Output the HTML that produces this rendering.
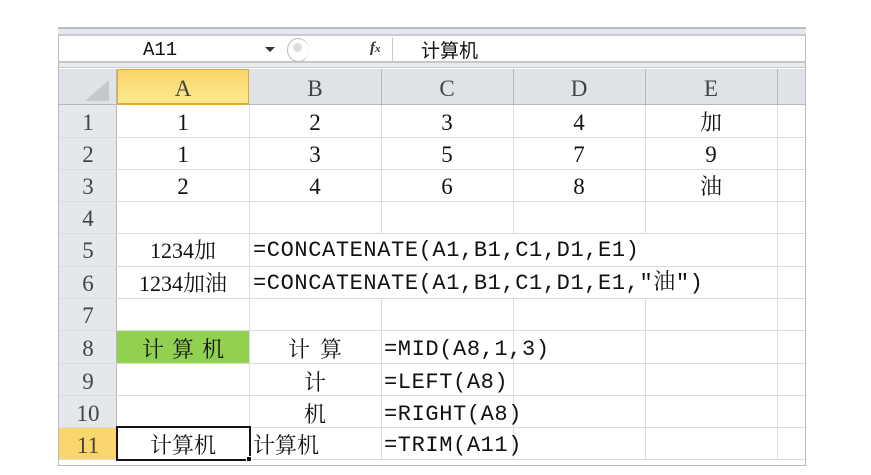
<!DOCTYPE html>
<html><head><meta charset="utf-8"><style>
body{margin:0;width:871px;height:475px;background:#fff;position:relative;overflow:hidden;font-family:"Liberation Serif","Noto Serif CJK SC",serif;}
div{position:absolute;box-sizing:border-box;}
.t{font-size:22px;line-height:32px;color:#111;white-space:nowrap;}
.c{text-align:center;}
.h{color:#444;}
.vl{width:1px;background:#dadcdd;}
.hl{height:1px;background:#dadcdd;}
.f{font-family:'Liberation Mono','Noto Serif CJK SC',monospace;letter-spacing:0.6px;}
</style></head><body>
<div style="left:58px;top:28px;width:748px;height:438px;border:1px solid #b8bcc2;border-top:none;"></div>
<div style="left:58px;top:27px;width:748px;height:9px;background:#e4e7eb;border-top:2px solid #b9bdc3;border-bottom:2px solid #c8ccd1;"></div>
<div style="left:59px;top:36px;width:746px;height:27px;background:#fff;border-bottom:2px solid #c3c7cc;"></div>
<div style="left:59px;top:63px;width:746px;height:5px;background:#e9ecef;border-bottom:1px solid #c8ccd1;"></div>
<div class="t" style="left:143px;top:34px;font-size:19px;font-family:'Liberation Mono',monospace;">A11</div>
<div style="left:265px;top:47px;width:0;height:0;border-left:5px solid transparent;border-right:5px solid transparent;border-top:5px solid #333;"></div>
<div style="left:287px;top:38px;width:22px;height:24px;border:1px solid #bbb;border-radius:50%;border-right:none;"></div>
<div style="left:293px;top:43px;width:9px;height:9px;border-radius:50%;background:#ddd;"></div>
<div style="left:370px;top:40px;font-family:'Liberation Serif';font-style:italic;font-weight:bold;font-size:15px;color:#333;">f<span style="font-size:11px">x</span></div>
<div style="left:392px;top:37px;width:1px;height:26px;background:#c8ccd1;"></div>
<div class="t" style="left:421px;top:34px;font-size:19px;font-family:'Noto Sans CJK SC',sans-serif;">计算机</div>
<div style="left:59px;top:69px;width:746px;height:36px;background:#dfe3e8;border-bottom:1px solid #b3b8be;"></div>
<div style="left:117px;top:69px;width:132px;height:36px;background:linear-gradient(#f8d56a,#fde98e);border:1px solid #e2a838;border-bottom:2px solid #e2a838;"></div>
<div style="left:85px;top:80px;width:0;height:0;border-left:24px solid transparent;border-bottom:21px solid #c5c9ce;"></div>
<div style="left:116px;top:69px;width:1px;height:36px;background:#b3b8be;"></div>
<div style="left:381px;top:69px;width:1px;height:36px;background:#b3b8be;"></div>
<div style="left:513px;top:69px;width:1px;height:36px;background:#b3b8be;"></div>
<div style="left:645px;top:69px;width:1px;height:36px;background:#b3b8be;"></div>
<div style="left:777px;top:69px;width:1px;height:36px;background:#b3b8be;"></div>
<div class="t c h" style="left:117px;top:73px;width:132px;font-size:23px;">A</div>
<div class="t c h" style="left:249px;top:73px;width:132px;font-size:23px;">B</div>
<div class="t c h" style="left:381px;top:73px;width:132px;font-size:23px;">C</div>
<div class="t c h" style="left:513px;top:73px;width:132px;font-size:23px;">D</div>
<div class="t c h" style="left:645px;top:73px;width:132px;font-size:23px;">E</div>
<div style="left:59px;top:105px;width:58px;height:355px;background:#e4e7ec;border-right:1px solid #b3b8be;"></div>
<div style="left:59px;top:427px;width:58px;height:32px;background:#f9d66b;border-right:1px solid #e2a838;"></div>
<div style="left:117px;top:331px;width:132px;height:32px;background:#92d050;"></div>
<div class="hl" style="left:59px;top:137px;width:746px;"></div>
<div class="hl" style="left:59px;top:169px;width:746px;"></div>
<div class="hl" style="left:59px;top:201px;width:746px;"></div>
<div class="hl" style="left:59px;top:233px;width:746px;"></div>
<div class="hl" style="left:59px;top:266px;width:746px;"></div>
<div class="hl" style="left:59px;top:298px;width:746px;"></div>
<div class="hl" style="left:59px;top:330px;width:746px;"></div>
<div class="hl" style="left:59px;top:363px;width:746px;"></div>
<div class="hl" style="left:59px;top:395px;width:746px;"></div>
<div class="hl" style="left:59px;top:427px;width:746px;"></div>
<div class="hl" style="left:59px;top:459px;width:746px;"></div>
<div class="vl" style="left:249px;top:105px;height:355px;"></div>
<div class="vl" style="left:381px;top:105px;height:128px;"></div>
<div class="vl" style="left:381px;top:298px;height:162px;"></div>
<div class="vl" style="left:513px;top:105px;height:128px;"></div>
<div class="vl" style="left:513px;top:298px;height:162px;"></div>
<div class="vl" style="left:645px;top:105px;height:128px;"></div>
<div class="vl" style="left:645px;top:298px;height:162px;"></div>
<div class="vl" style="left:777px;top:105px;height:355px;"></div>
<div class="t c h" style="left:59px;top:107px;width:58px;font-size:23px;">1</div>
<div class="t c h" style="left:59px;top:139px;width:58px;font-size:23px;">2</div>
<div class="t c h" style="left:59px;top:171px;width:58px;font-size:23px;">3</div>
<div class="t c h" style="left:59px;top:203px;width:58px;font-size:23px;">4</div>
<div class="t c h" style="left:59px;top:235px;width:58px;font-size:23px;">5</div>
<div class="t c h" style="left:59px;top:268px;width:58px;font-size:23px;">6</div>
<div class="t c h" style="left:59px;top:300px;width:58px;font-size:23px;">7</div>
<div class="t c h" style="left:59px;top:333px;width:58px;font-size:23px;">8</div>
<div class="t c h" style="left:59px;top:366px;width:58px;font-size:23px;">9</div>
<div class="t c h" style="left:59px;top:398px;width:58px;font-size:23px;">10</div>
<div class="t c h" style="left:59px;top:430px;width:58px;font-size:23px;">11</div>
<div class="t c" style="left:117px;top:107px;width:132px;font-size:23px;">1</div>
<div class="t c" style="left:249px;top:107px;width:132px;font-size:23px;">2</div>
<div class="t c" style="left:381px;top:107px;width:132px;font-size:23px;">3</div>
<div class="t c" style="left:513px;top:107px;width:132px;font-size:23px;">4</div>
<div class="t c" style="left:645px;top:107px;width:132px;">加</div>
<div class="t c" style="left:117px;top:139px;width:132px;font-size:23px;">1</div>
<div class="t c" style="left:249px;top:139px;width:132px;font-size:23px;">3</div>
<div class="t c" style="left:381px;top:139px;width:132px;font-size:23px;">5</div>
<div class="t c" style="left:513px;top:139px;width:132px;font-size:23px;">7</div>
<div class="t c" style="left:645px;top:139px;width:132px;font-size:23px;">9</div>
<div class="t c" style="left:117px;top:171px;width:132px;font-size:23px;">2</div>
<div class="t c" style="left:249px;top:171px;width:132px;font-size:23px;">4</div>
<div class="t c" style="left:381px;top:171px;width:132px;font-size:23px;">6</div>
<div class="t c" style="left:513px;top:171px;width:132px;font-size:23px;">8</div>
<div class="t c" style="left:645px;top:171px;width:132px;">油</div>
<div class="t c" style="left:117px;top:235px;width:132px;">1234加</div>
<div class="t f" style="left:253px;top:235px;">=CONCATENATE(A1,B1,C1,D1,E1)</div>
<div class="t c" style="left:117px;top:268px;width:132px;">1234加油</div>
<div class="t f" style="left:253px;top:268px;">=CONCATENATE(A1,B1,C1,D1,E1,"油")</div>
<div class="t c" style="left:117px;top:334px;width:132px;letter-spacing:8px;text-indent:8px;">计算机</div>
<div class="t c" style="left:249px;top:334px;width:132px;letter-spacing:10px;text-indent:10px;">计算</div>
<div class="t f" style="left:384px;top:334px;">=MID(A8,1,3)</div>
<div class="t c" style="left:249px;top:367px;width:132px;">计</div>
<div class="t f" style="left:384px;top:367px;">=LEFT(A8)</div>
<div class="t c" style="left:249px;top:399px;width:132px;">机</div>
<div class="t f" style="left:384px;top:399px;">=RIGHT(A8)</div>
<div class="t c" style="left:117px;top:430px;width:132px;">计算机</div>
<div class="t" style="left:253px;top:430px;">计算机</div>
<div class="t f" style="left:384px;top:430px;">=TRIM(A11)</div>
<div style="left:116px;top:426px;width:135px;height:35px;border:2px solid #111;"></div>
<div style="left:246px;top:456px;width:6px;height:6px;background:#111;border:1px solid #fff;"></div>
</body></html>
